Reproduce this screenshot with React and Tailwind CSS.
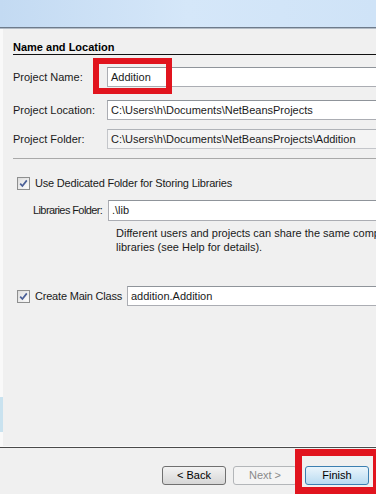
import React from "react";

function Check() {
  return (
    <div className="w-[13px] h-[13px] border border-[#8e8f8f] bg-linear-to-br from-[#dcdcdc] to-[#f8f8f8] flex items-center justify-center shrink-0">
      <div className="w-[9px] h-[9px] bg-linear-to-br from-[#e2e2e2] to-[#fbfbfb] flex items-center justify-center">
        <svg width="9" height="9" viewBox="0 0 9 9">
          <path d="M1.2 4.6 L3.4 7 L7.8 1.4" fill="none" stroke="#4a5f97" strokeWidth="1.7" />
        </svg>
      </div>
    </div>
  );
}

function Field({ children, disabled, className = "" }) {
  return (
    <div
      className={
        "flex-1 h-full flex items-center pl-[3px] border border-[#abadb3] border-t-[#8f949a] whitespace-nowrap overflow-hidden " +
        (disabled ? "bg-[#f4f4f4] border-[#c4c6ca] border-t-[#b0b3b8] " : "bg-white ") +
        className
      }
    >
      {children}
    </div>
  );
}

export default function App() {
  return (
    <div
      className="relative w-[376px] h-[494px] overflow-hidden bg-[#f0f0f0] text-[11px] leading-[13px] text-[#1a1a1a] flex flex-col"
      style={{ fontFamily: '"Liberation Sans", Arial, sans-serif' }}
    >
      <div className="h-[27px] shrink-0 bg-linear-to-r from-[#c3daf2] via-[#d5e7f9] to-[#cfe3f7]" />
      <div className="h-px shrink-0 bg-[#6e7b8b]" />
      <div className="h-px shrink-0 bg-[#b3bcc6]" />

      <div className="flex h-[417px] shrink-0">
        <div className="w-[3px] shrink-0 bg-[#f9f9f9] flex flex-col">
          <div className="h-[368px]" />
          <div className="h-[35px] bg-[#c9e2ef]" />
        </div>
        <div className="w-[440px] shrink-0 pl-[10px] pt-[12px] flex flex-col">
          <div className="h-[14px] font-bold border-b border-[#111] text-black">
            Name and Location
          </div>

          <div className="flex items-center h-[20px] mt-[12px]">
            <div className="w-[94px] shrink-0 whitespace-nowrap">Project Name:</div>
            <Field>Addition</Field>
          </div>
          <div className="flex items-center h-[20px] mt-[13px]">
            <div className="w-[94px] shrink-0 whitespace-nowrap">Project Location:</div>
            <Field>C:\Users\h\Documents\NetBeansProjects</Field>
          </div>
          <div className="flex items-center h-[20px] mt-[9px]">
            <div className="w-[94px] shrink-0 whitespace-nowrap">Project Folder:</div>
            <Field disabled>C:\Users\h\Documents\NetBeansProjects\Addition</Field>
          </div>

          <div className="h-px mt-[9px] bg-[#a9a9a9]" />

          <div className="flex items-center h-[13px] mt-[18px] pl-[4px]">
            <Check />
            <div className="ml-[5px] whitespace-nowrap tracking-[-0.2px]">Use Dedicated Folder for Storing Libraries</div>
          </div>

          <div className="flex items-center h-[21px] mt-[10px] pl-[20px]">
            <div className="w-[75px] shrink-0 whitespace-nowrap tracking-[-0.6px]">Libraries Folder:</div>
            <Field>.\lib</Field>
          </div>

          <div className="mt-[5px] pl-[103px] leading-[14px] whitespace-nowrap">
            <div>Different users and projects can share the same compilation</div>
            <div>libraries (see Help for details).</div>
          </div>

          <div className="flex items-center h-[20px] mt-[32px] pl-[4px]">
            <Check />
            <div className="ml-[5px] w-[92px] shrink-0 whitespace-nowrap tracking-[-0.2px]">Create Main Class</div>
            <Field>addition.Addition</Field>
          </div>
        </div>
      </div>

      <div className="h-px shrink-0 bg-[#fafafa]" />
      <div className="h-px shrink-0 bg-[#4a4a4a]" />

      <div className="flex-1 flex items-start pt-[18px] pl-[162px]">
        <div className="w-[64px] h-[19px] rounded-[3px] border border-[#707070] bg-linear-to-b from-[#f3f3f3] to-[#d6d6d6] flex items-center justify-center text-black">
          &lt; Back
        </div>
        <div className="ml-[7px] w-[64px] h-[19px] rounded-[3px] border border-[#b3b6b9] bg-[#f4f4f4] flex items-center justify-center text-[#8a8a8a]">
          Next &gt;
        </div>
        <div className="ml-[8px] w-[64px] h-[19px] rounded-[3px] border border-[#3c7fb1] bg-linear-to-b from-[#eaf5fc] to-[#b9dbf1] flex items-center justify-center text-black">
          Finish
        </div>
      </div>

      <div className="absolute left-[93px] top-[58px] w-[79px] h-[36px] border-[6px] border-[#e1141e]" />
      <div className="absolute left-[295px] top-[449px] w-[85px] h-[45px] border-[7px] border-[#e1141e]" />
    </div>
  );
}
